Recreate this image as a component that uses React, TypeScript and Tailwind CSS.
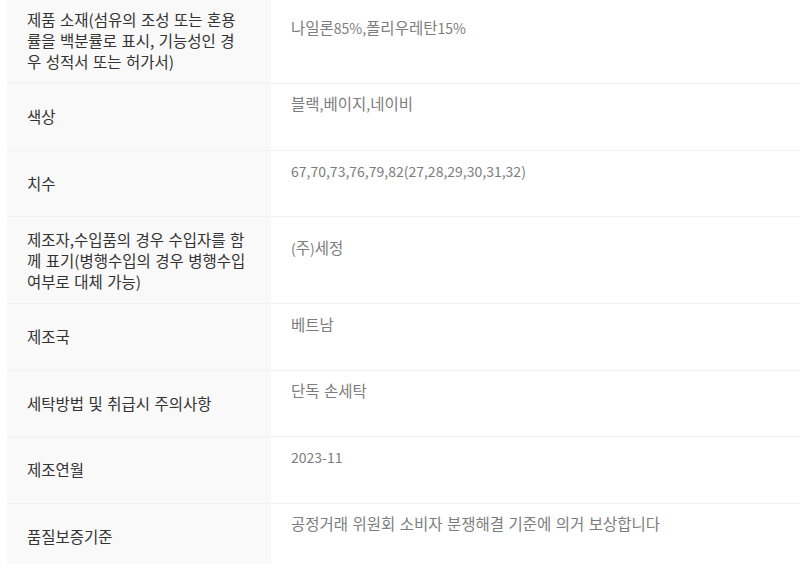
const rows: { label: string; value: string }[] = [
  {
    label: '제품 소재(섬유의 조성 또는 혼용률을 백분률로 표시, 기능성인 경우 성적서 또는 허가서)',
    value: '나일론85%,폴리우레탄15%',
  },
  { label: '색상', value: '블랙,베이지,네이비' },
  { label: '치수', value: '67,70,73,76,79,82(27,28,29,30,31,32)' },
  {
    label: '제조자,수입품의 경우 수입자를 함께 표기(병행수입의 경우 병행수입 여부로 대체 가능)',
    value: '(주)세정',
  },
  { label: '제조국', value: '베트남' },
  { label: '세탁방법 및 취급시 주의사항', value: '단독 손세탁' },
  { label: '제조연월', value: '2023-11' },
  { label: '품질보증기준', value: '공정거래 위원회 소비자 분쟁해결 기준에 의거 보상합니다' },
];

// latin / digit runs are set a bit smaller than the hangul, like the original font
const renderValue = (text: string) =>
  text.split(/([0-9A-Za-z%,.\-()]+)/).map((part, i) =>
    /^[0-9A-Za-z%,.\-()]+$/.test(part) ? (
      <span key={i} className="text-[14px]">
        {part}
      </span>
    ) : (
      <span key={i}>{part}</span>
    )
  );

export default function App() {
  return (
    <div
      className="h-[564px] overflow-hidden bg-white pl-[7px] text-[15.5px] leading-[21px] [word-spacing:1px]"
      style={{ fontFamily: '"Noto Sans CJK KR", "Noto Sans", sans-serif' }}
    >
      <div className="-mt-[3px]">
        {rows.map((row) => (
          <div key={row.label} className="flex min-h-[66.5px] border-b border-[#f1f1f1]">
            <div className="flex w-[264px] shrink-0 items-center bg-[#f9f9f9] py-[11.5px] pl-5 pr-[23px] text-[#333]">
              <span className="break-all">{row.label}</span>
            </div>
            <div className="flex flex-1 items-center px-5 text-[#7d7d7d]">
              <div className="pb-[25px]">{renderValue(row.value)}</div>
            </div>
          </div>
        ))}
      </div>
    </div>
  );
}
